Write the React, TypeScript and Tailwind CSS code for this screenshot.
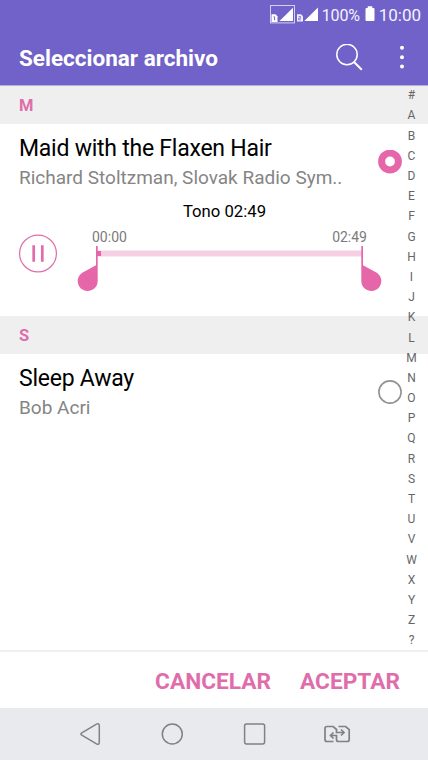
type Track = {
  title: string;
  artist: string;
};

const maid: Track = {
  title: "Maid with the Flaxen Hair",
  artist: "Richard Stoltzman, Slovak Radio Sym..",
};

const sleep: Track = {
  title: "Sleep Away",
  artist: "Bob Acri",
};

const letters = "#ABCDEFGHIJKLMNOPQRSTUVWXYZ?".split("");

function StatusBar() {
  return (
    <div className="flex h-[30px] items-center justify-end pt-px pr-[7px] text-[#f4f2ff]">
      <svg width="50" height="20" viewBox="0 0 50 20" fill="none" className="-mt-px mr-[3px]">
        <rect x="1.5" y="0.5" width="24" height="17.4" stroke="#fff" strokeOpacity=".7" />
        <path d="M10.5 16 24 2.8V16z" fill="#fff" />
        <path d="M2.5 9.3h4l2 2V17h-6z" fill="#fff" />
        <path d="M4.6 11.8h1v3.4" stroke="#7162c9" strokeWidth="1" />
        <path d="M35.3 16 49 2.5V16z" fill="#fff" />
        <path d="M28 9.3h4l2 2v5.2h-6z" fill="#fff" fillOpacity=".9" />
        <path d="M29.6 11.6h2v1.6h-2v1.6h2.3" stroke="#7162c9" strokeWidth=".8" />
      </svg>
      <span className="w-[39px] text-[16px] tracking-[-0.1px] whitespace-nowrap">100%</span>
      <svg width="10" height="16" viewBox="0 0 10 16" fill="#fff" className="-mt-[3px] mr-[4px] ml-[4px]">
        <path d="M2.7 .3h4.6V2h1.2q1 0 1 1v11q0 1-1 1H1.5q-1 0-1-1V3q0-1 1-1h1.2z" />
      </svg>
      <span className="text-[17px]">10:00</span>
    </div>
  );
}

function Header() {
  return (
    <header className="h-[86px] border-b border-[#b5aee0] bg-[#7162c9]">
      <StatusBar />
      <div className="flex h-[56px] items-center pl-[19px]">
        <h1 className="flex-1 pt-[2px] text-[22.5px] font-bold text-white">Seleccionar archivo</h1>
        <svg width="28" height="28" viewBox="0 0 28 28" fill="none" stroke="#fff" strokeWidth="1.5" className="mr-[36px]">
          <circle cx="12" cy="10.5" r="10.2" />
          <path d="m19 18 7.8 7.8" strokeWidth="2" />
        </svg>
        <svg width="6" height="26" viewBox="0 0 6 26" fill="#fff" className="mr-[23px]">
          <circle cx="3" cy="2.7" r="2" />
          <circle cx="3" cy="12.2" r="2" />
          <circle cx="3" cy="21.5" r="2" />
        </svg>
      </div>
    </header>
  );
}

function SectionTitle({ children }: { children: string }) {
  return (
    <div className="flex h-[38px] items-center bg-[#efefef] pt-[2px] pl-[19px] text-[16.5px] font-bold text-[#e06dab]">
      {children}
    </div>
  );
}

function TrackRow({ track, selected = false }: { track: Track; selected?: boolean }) {
  return (
    <div className="flex h-[76px] items-center pr-[26px] pl-[19px]">
      <div className="flex-1 whitespace-nowrap">
        <div className="text-[23px] leading-[31px] tracking-[-0.24px] text-black">{track.title}</div>
        <div className="text-[19px] leading-[28px] text-[#858585]">{track.artist}</div>
      </div>
      <svg width="24" height="24" viewBox="0 0 24 24" fill="none">
        {selected ? (
          <circle cx="12" cy="11.5" r="8.4" stroke="#e667a9" strokeWidth="7" />
        ) : (
          <circle cx="12" cy="12" r="11.1" stroke="#929292" strokeWidth="1.6" />
        )}
      </svg>
    </div>
  );
}

function Player() {
  return (
    <div className="h-[116px]">
      <div className="h-[21px] pt-[2px] pl-[21px] text-center text-[16.7px] leading-[20px] text-black">
        <span>Tono 02:49</span>
      </div>
      <div className="flex">
        <svg width="40" height="40" viewBox="0 0 40 40" fill="none" stroke="#e06dab" className="mt-[13px] ml-[18px]">
          <circle cx="20" cy="19.5" r="18.4" strokeWidth="1.2" />
          <path d="M15.7 11.2v16.5M24.3 11.2v16.5" strokeWidth="2.7" />
        </svg>
        <div className="ml-[18px] w-[308px]">
          <div className="flex justify-between pt-[7px] pr-[17px] pl-[16px] text-[14px] leading-[18px] text-[#7b7b7b]">
            <span>00:00</span>
            <span>02:49</span>
          </div>
          <svg width="308" height="47" viewBox="0 0 308 47" fill="#e667a9">
            <rect x="21" y="4.5" width="266" height="6" fill="#f7cfe3" />
            <rect x="21" y="5" width="4" height="5" />
            <path d="M20 -1h1.7v36a10 10 0 1 1-15.5-8.3L20 19.2z" />
            <path d="M287 -1h-1.7v36a10 10 0 1 0 15.5-8.3L287 19.2z" />
          </svg>
        </div>
      </div>
    </div>
  );
}

function LetterIndex() {
  return (
    <div className="absolute top-[-0.8px] right-0 flex h-[565.4px] w-[33px] flex-col">
      {letters.map((l) => (
        <span key={l} className="flex flex-1 items-center justify-center text-[12px] leading-none text-[#666666]">
          {l}
        </span>
      ))}
    </div>
  );
}

function NavBar() {
  return (
    <nav className="flex h-[52px] items-center bg-[#e9eaee] pl-[80px]">
      <svg width="22" height="24" viewBox="0 0 22 24" fill="none" stroke="#808184" strokeWidth="1.5">
        <path d="M1.8 10.8 16.5 2.2q2.8-1.4 2.8 1.6v16.4q0 3-2.8 1.6L1.8 13.2q-1.7-1.2 0-2.4z" />
      </svg>
      <svg width="24" height="24" viewBox="0 0 24 24" fill="none" stroke="#808184" strokeWidth="1.5" className="ml-[58px]">
        <circle cx="12.3" cy="12" r="10" />
      </svg>
      <svg width="24" height="24" viewBox="0 0 24 24" fill="none" stroke="#808184" strokeWidth="1.5" className="ml-[59px]">
        <rect x="1.6" y="1.9" width="20" height="20" rx="1.8" />
      </svg>
      <svg width="28" height="20" viewBox="0 0 28 20" fill="none" stroke="#808184" strokeWidth="1.7" className="ml-[56px]">
        <path d="M10.5 17.5H4Q2 17.5 2 15.5v-11q0-2 2-2h6.2l3.3 3v3h7" />
        <path d="m18 5.5 3 3-3 3" />
        <path d="M15.5 2.5h7.2l3.5 3.2v9.8q0 2-2 2h-8.7q-2 0-2-2v-4H7.5" />
        <path d="m10.5 8.5-3 3 3 3" />
      </svg>
    </nav>
  );
}

export default function App() {
  return (
    <div className="flex h-[760px] w-[428px] flex-col overflow-hidden bg-white font-[Roboto,sans-serif]">
      <Header />
      <main className="relative h-[564px]">
        <SectionTitle>M</SectionTitle>
        <TrackRow track={maid} selected />
        <Player />
        <SectionTitle>S</SectionTitle>
        <TrackRow track={sleep} />
        <LetterIndex />
      </main>
      <footer className="flex h-[58px] items-center justify-end gap-[29px] border-t-2 border-[#f0f0f0] pt-[4px] pr-[28px] text-[22.7px] font-bold text-[#e06dab]">
        <button>CANCELAR</button>
        <button>ACEPTAR</button>
      </footer>
      <NavBar />
    </div>
  );
}
